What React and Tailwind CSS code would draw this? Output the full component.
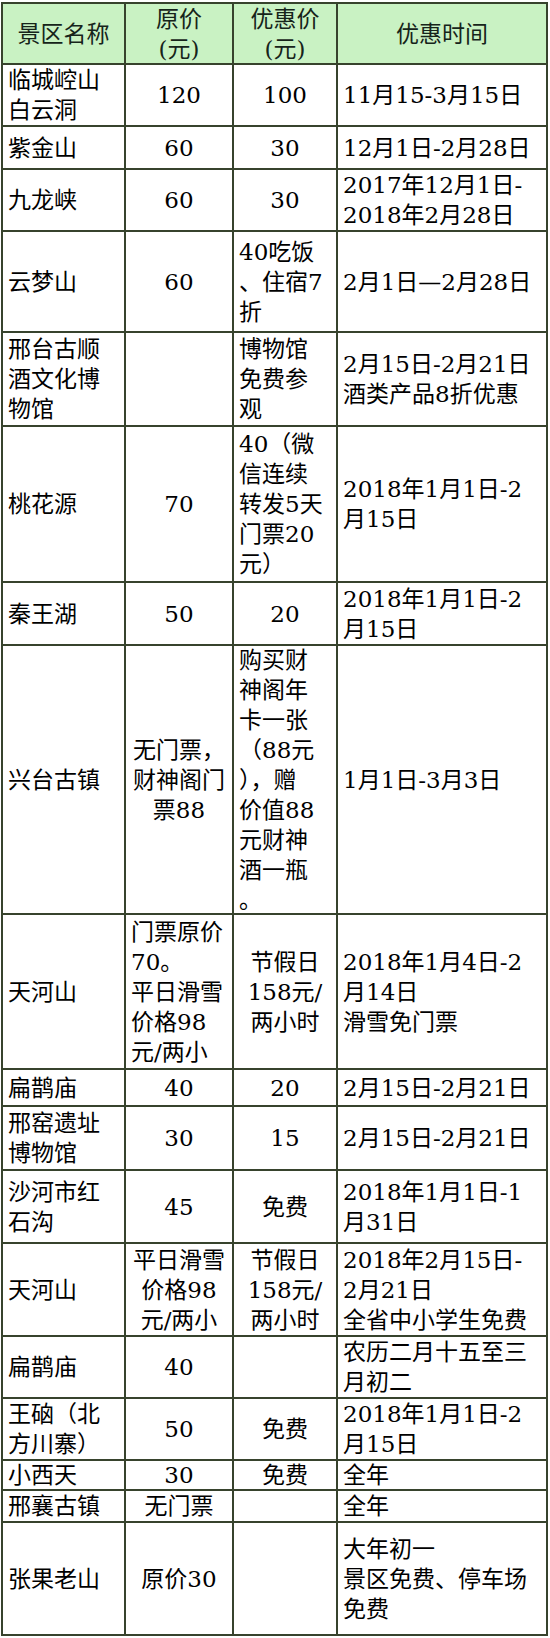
import React from 'react';

// 景区优惠表 — each cell is a list of lines, wrapped by hand as in the source table
const rows = [
  { h: 62, name: ['临城崆山', '白云洞'], price: ['120'], deal: ['100'], time: ['11月15-3月15日'] },
  { h: 43, name: ['紫金山'], price: ['60'], deal: ['30'], time: ['12月1日-2月28日'] },
  { h: 62, name: ['九龙峡'], price: ['60'], deal: ['30'], time: ['2017年12月1日-', '2018年2月28日'] },
  { h: 101, name: ['云梦山'], price: ['60'], deal: ['40吃饭', '、住宿7', '折'], dealLeft: true, time: ['2月1日—2月28日'] },
  { h: 94, name: ['邢台古顺', '酒文化博', '物馆'], price: [], deal: ['博物馆', '免费参', '观'], dealLeft: true, time: ['2月15日-2月21日', '酒类产品8折优惠'] },
  { h: 156, name: ['桃花源'], price: ['70'], deal: ['40（微', '信连续', '转发5天', '门票20', '元）'], dealLeft: true, time: ['2018年1月1日-2', '月15日'] },
  { h: 63, name: ['秦王湖'], price: ['50'], deal: ['20'], time: ['2018年1月1日-2', '月15日'] },
  {
    h: 269,
    name: ['兴台古镇'],
    price: ['无门票，', '财神阁门', '票88'],
    deal: ['购买财', '神阁年', '卡一张', '（88元', '），赠', '价值88', '元财神', '酒一瓶', '。'],
    dealLeft: true,
    time: ['1月1日-3月3日'],
  },
  {
    h: 155,
    name: ['天河山'],
    price: ['门票原价', '70。', '平日滑雪', '价格98', '元/两小'],
    priceLeft: true,
    deal: ['节假日', '158元/', '两小时'],
    time: ['2018年1月4日-2', '月14日', '滑雪免门票'],
  },
  { h: 37, name: ['扁鹊庙'], price: ['40'], deal: ['20'], time: ['2月15日-2月21日'] },
  { h: 64, name: ['邢窑遗址', '博物馆'], price: ['30'], deal: ['15'], time: ['2月15日-2月21日'] },
  { h: 73, name: ['沙河市红', '石沟'], price: ['45'], deal: ['免费'], time: ['2018年1月1日-1', '月31日'] },
  {
    h: 93,
    name: ['天河山'],
    price: ['平日滑雪', '价格98', '元/两小'],
    deal: ['节假日', '158元/', '两小时'],
    time: ['2018年2月15日-', '2月21日', '全省中小学生免费'],
  },
  { h: 62, name: ['扁鹊庙'], price: ['40'], deal: [], time: ['农历二月十五至三', '月初二'] },
  { h: 62, name: ['王硇（北', '方川寨）'], price: ['50'], deal: ['免费'], time: ['2018年1月1日-2', '月15日'] },
  { h: 30, name: ['小西天'], price: ['30'], deal: ['免费'], time: ['全年'] },
  { h: 32, name: ['邢襄古镇'], price: ['无门票'], deal: [], time: ['全年'] },
  { h: 111, name: ['张果老山'], price: ['原价30'], deal: [], time: ['大年初一', '景区免费、停车场', '免费'] },
];

function Cell({ lines, left, last }) {
  return (
    <div
      className={`flex flex-col justify-center overflow-hidden ${left ? 'items-start pl-[5px]' : 'items-center'} ${last ? '' : 'border-r-2 border-[#37432d]'}`}
    >
      {lines.map((line, i) => (
        <span key={i} className="whitespace-nowrap">{line}</span>
      ))}
    </div>
  );
}

export default function App() {
  return (
    <div className="min-h-screen bg-white pt-[2px] pl-[1px]">
      <div className="w-[547px] border-2 border-[#37432d] font-['DejaVu_Serif','Noto_Sans_CJK_SC',serif] text-[23px] leading-[30px] text-black">
        {/* Header */}
        <div className="grid h-[61px] grid-cols-[123px_108px_104px_1fr] border-b-2 border-[#37432d] bg-[#c9f2c3] text-[#16241a]">
          <Cell lines={['景区名称']} />
          <Cell lines={['原价', '(元)']} />
          <Cell lines={['优惠价', '(元)']} />
          <Cell lines={['优惠时间']} last />
        </div>

        {rows.map((row, i) => (
          <div
            key={i}
            className={`grid grid-cols-[123px_108px_104px_1fr] ${i < rows.length - 1 ? 'border-b-2 border-[#37432d]' : ''}`}
            style={{ height: row.h }}
          >
            <Cell lines={row.name} left />
            <Cell lines={row.price} left={row.priceLeft} />
            <Cell lines={row.deal} left={row.dealLeft} />
            <Cell lines={row.time} left last />
          </div>
        ))}
      </div>
    </div>
  );
}
